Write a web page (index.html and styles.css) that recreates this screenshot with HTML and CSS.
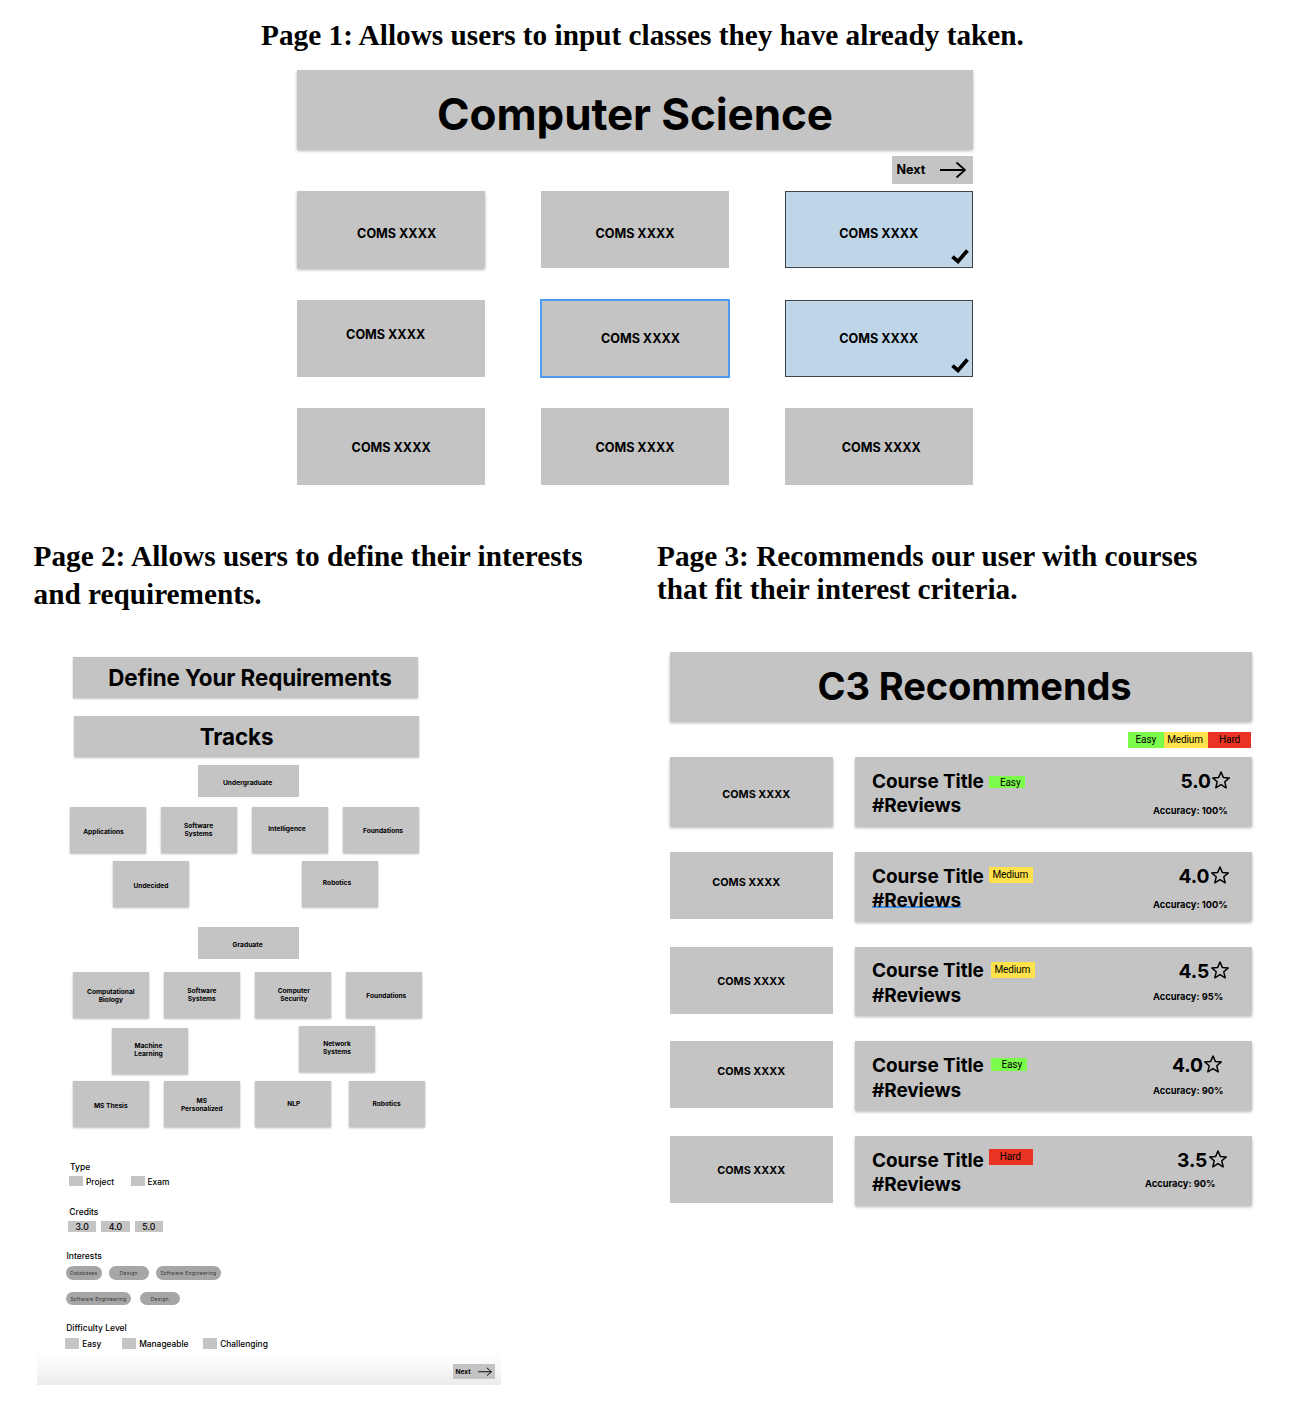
FILE: index.html
```html
<!DOCTYPE html>
<html lang="en">
<head>
<meta charset="utf-8">
<title>Course planner wireframes</title>
<link rel="stylesheet" href="styles.css">
</head>
<body>
<svg class="defs" aria-hidden="true">
  <symbol id="arrow" viewBox="0 0 26 18"><path d="M0 9H25M16.5 1.5L25 9L16.5 16.5" fill="none" stroke="#000" stroke-width="1.8"/></symbol>
  <symbol id="check" viewBox="0 0 18 15"><path d="M1.5 7.6L7 12.4L16.4 1.4" fill="none" stroke="#000" stroke-width="3.8"/></symbol>
  <symbol id="star" viewBox="0 0 18 18"><path d="M9 1L11.3 6.4L17.3 6.9L12.8 10.8L14.2 16.8L9 13.6L3.8 16.8L5.2 10.8L0.7 6.9L6.7 6.4Z" fill="none" stroke="#000" stroke-width="1.5" stroke-linejoin="round"/></symbol>
</svg>

<section class="classes">
  <h2 class="caption caption-center">Page 1: Allows users to input classes they have already taken.</h2>
  <div class="classes-screen">
    <header class="banner banner-lg">Computer Science</header>
    <div class="next next-lg"><span>Next</span><svg><use href="#arrow"/></svg></div>
    <div class="class-grid">
      <div class="class-card raised"><span class="right-6 down-4">COMS XXXX</span></div>
      <div class="class-card"><span class="down-4">COMS XXXX</span></div>
      <div class="class-card taken"><span class="down-4">COMS XXXX</span><svg class="check"><use href="#check"/></svg></div>
      <div class="class-card"><span class="left-6 up-4">COMS XXXX</span></div>
      <div class="class-card focused"><span class="right-6">COMS XXXX</span></div>
      <div class="class-card taken"><span>COMS XXXX</span><svg class="check"><use href="#check"/></svg></div>
      <div class="class-card"><span class="down-1">COMS XXXX</span></div>
      <div class="class-card"><span class="down-1">COMS XXXX</span></div>
      <div class="class-card"><span class="right-3 down-1">COMS XXXX</span></div>
    </div>
  </div>
</section>

<main class="columns">
  <section class="requirements">
    <h2 class="caption caption-loose">Page 2: Allows users to define their interests<br>and requirements.</h2>
    <div class="req-screen">
      <header class="banner banner-sm define"><span>Define Your Requirements</span></header>
      <header class="banner banner-sm tracks"><span>Tracks</span></header>

      <div class="level undergrad"><span>Undergraduate</span></div>
      <div class="track-row row-a">
        <div class="track"><span class="left-4 down-2">Applications</span></div>
        <div class="track"><span>Software<br>Systems</span></div>
        <div class="track"><span class="left-3 up-1">Intelligence</span></div>
        <div class="track"><span class="right-3 down-1">Foundations</span></div>
      </div>
      <div class="track-row row-b">
        <div class="track"><span class="down-2">Undecided</span></div>
        <div class="track"><span class="left-3 up-1">Robotics</span></div>
      </div>

      <div class="level graduate"><span>Graduate</span></div>
      <div class="track-row row-c">
        <div class="track"><span class="down-1">Computational<br>Biology</span></div>
        <div class="track"><span>Software<br>Systems</span></div>
        <div class="track"><span class="right-1">Computer<br>Security</span></div>
        <div class="track"><span class="right-3 down-1">Foundations</span></div>
      </div>
      <div class="track-row row-d">
        <div class="track"><span class="left-2 up-1">Machine<br>Learning</span></div>
        <div class="track"><span class="up-1">Network<br>Systems</span></div>
      </div>
      <div class="track-row row-e">
        <div class="track"><span class="down-2">MS Thesis</span></div>
        <div class="track"><span class="down-1">MS<br>Personalized</span></div>
        <div class="track"><span class="right-1">NLP</span></div>
        <div class="track"><span>Robotics</span></div>
      </div>

      <div class="field type">
        <h3>Type</h3>
        <div class="options"><label class="w61"><i></i>Project</label><label><i></i>Exam</label></div>
      </div>
      <div class="field credits">
        <h3>Credits</h3>
        <div class="credit-row"><b>3.0</b><b class="wide">4.0</b><b>5.0</b></div>
      </div>
      <div class="field interests">
        <h3>Interests</h3>
        <div class="pills"><em class="p37">Databases</em><em class="p40">Design</em><em class="p66">Software Engineering</em></div>
        <div class="pills second"><em class="p66">Software Engineering</em><em class="p40">Design</em></div>
      </div>
      <div class="field difficulty">
        <h3>Difficulty Level</h3>
        <div class="options"><label class="w57"><i></i>Easy</label><label class="w81"><i></i>Manageable</label><label><i></i>Challenging</label></div>
      </div>
      <footer class="req-footer"><div class="next next-sm"><span>Next</span><svg><use href="#arrow"/></svg></div></footer>
    </div>
  </section>

  <section class="recommends">
    <h2 class="caption">Page 3: Recommends our user with courses<br>that fit their interest criteria.</h2>
    <div class="rec-screen">
      <header class="banner banner-md">C3 Recommends</header>
      <div class="legend"><span class="easy">Easy</span><span class="medium">Medium</span><span class="hard">Hard</span></div>

      <article class="rec rec-1">
        <div class="code raised"><span>COMS XXXX</span></div>
        <div class="course">
          <div class="title">Course Title<br>#Reviews</div>
          <span class="badge easy">Easy</span>
          <div class="rating"><div class="score">5.0<svg><use href="#star"/></svg></div><div class="accuracy">Accuracy: 100%</div></div>
        </div>
      </article>
      <article class="rec rec-2">
        <div class="code"><span>COMS XXXX</span></div>
        <div class="course">
          <div class="title">Course Title<br><u>#Reviews</u></div>
          <span class="badge medium">Medium</span>
          <div class="rating"><div class="score">4.0<svg><use href="#star"/></svg></div><div class="accuracy">Accuracy: 100%</div></div>
        </div>
      </article>
      <article class="rec rec-3">
        <div class="code"><span>COMS XXXX</span></div>
        <div class="course">
          <div class="title">Course Title<br>#Reviews</div>
          <span class="badge medium">Medium</span>
          <div class="rating"><div class="score">4.5<svg><use href="#star"/></svg></div><div class="accuracy">Accuracy: 95%</div></div>
        </div>
      </article>
      <article class="rec rec-4">
        <div class="code"><span>COMS XXXX</span></div>
        <div class="course">
          <div class="title">Course Title<br>#Reviews</div>
          <span class="badge easy">Easy</span>
          <div class="rating"><div class="score">4.0<svg><use href="#star"/></svg></div><div class="accuracy">Accuracy: 90%</div></div>
        </div>
      </article>
      <article class="rec rec-5">
        <div class="code"><span>COMS XXXX</span></div>
        <div class="course">
          <div class="title">Course Title<br>#Reviews</div>
          <span class="badge hard">Hard</span>
          <div class="rating"><div class="score">3.5<svg><use href="#star"/></svg></div><div class="accuracy">Accuracy: 90%</div></div>
        </div>
      </article>
    </div>
  </section>
</main>
</body>
</html>
```

FILE: styles.css
```css
* { box-sizing: border-box; }
body {
  margin: 0;
  width: 1302px;
  height: 1408px;
  overflow: hidden;
  background: #fff;
  color: #000;
  font-family: Inter, "Liberation Sans", sans-serif;
  white-space: nowrap;
}
.defs { display: none; }
svg { display: block; flex: none; }

.caption {
  margin: 0;
  font: bold 29.28px/33px "Liberation Serif", "Times New Roman", serif;
}
.caption-center { width: 1285px; text-align: center; }
.caption-loose { line-height: 38px; margin-top: -1px; }

.banner {
  display: flex;
  align-items: center;
  justify-content: center;
  background: #c4c4c4;
  font-weight: 700;
  box-shadow: 0 2px 3px rgba(0, 0, 0, .28);
}
.raised { box-shadow: 0 2px 3px rgba(0, 0, 0, .28); }

/* Label nudges inside the cards */
.right-1 { margin-left: 2px; }
.right-3 { margin-left: 5px; }
.right-6 { margin-left: 11px; }
.left-2 { margin-right: 3px; }
.left-3 { margin-right: 5px; }
.left-4 { margin-right: 8px; }
.left-6 { margin-right: 11px; }
.down-1 { margin-top: 2px; }
.down-2 { margin-top: 4px; }
.down-4 { margin-top: 8px; }
.up-1 { margin-bottom: 2px; }
.up-4 { margin-bottom: 8px; }

/* Page 1 */
.classes { height: 538px; padding-top: 19px; }
.classes-screen { width: 676px; margin: 18px 0 0 297px; }
.banner-lg { height: 79px; padding-top: 8px; font-size: 44px; letter-spacing: -.1px; }
.next { display: flex; align-items: center; background: #c4c4c4; font-weight: 700; }
.next-lg {
  width: 81.5px;
  height: 28px;
  margin: 6.5px 0 7.5px auto;
  padding-left: 5px;
  gap: 15px;
  font-size: 12.6px;
}
.next-lg svg { width: 26px; height: 18px; }
.class-grid {
  display: grid;
  grid-template-columns: repeat(3, 188.4px);
  grid-auto-rows: 77px;
  gap: 31.5px 55.4px;
}
.class-card {
  position: relative;
  display: flex;
  align-items: center;
  justify-content: center;
  background: #c4c4c4;
  font-size: 12.6px;
  font-weight: 700;
}
.taken { background: #bfd6e9; border: 1.5px solid #3c444b; }
.focused { outline: 2px solid #4c9bf5; outline-offset: -1px; }
.check { position: absolute; right: 3px; bottom: 3px; width: 18px; height: 15px; }

/* Lower columns */
.columns { display: flex; align-items: flex-start; }
.requirements { width: 657px; padding-left: 33.5px; }
.req-screen { width: 464px; margin-left: 3.5px; padding-top: 44px; }
.banner-sm { width: 345px; height: 41px; font-size: 22.4px; letter-spacing: -.08px; box-shadow: 0 1px 2px rgba(0, 0, 0, .25); }
.define { margin-left: 36px; padding-left: 9px; }
.tracks { margin: 18px 0 0 37px; padding-right: 20px; }
.level {
  display: flex;
  align-items: center;
  justify-content: center;
  width: 100.5px;
  height: 32px;
  margin-left: 161.3px;
  padding: 3px 2px 0 0;
  background: #c4c4c4;
  font-size: 6.7px;
  font-weight: 700;
}
.undergrad { margin-top: 8px; }
.graduate { margin-top: 20.5px; }
.track-row { display: flex; }
.track {
  display: flex;
  align-items: center;
  justify-content: center;
  width: 76px;
  height: 46px;
  background: #c4c4c4;
  box-shadow: 0 1px 2px rgba(0, 0, 0, .28);
  font-size: 6.6px;
  line-height: 8px;
  font-weight: 700;
  text-align: center;
}
.row-a { margin: 9.5px 0 0 32.5px; gap: 15px; }
.row-b { margin: 8px 0 0 76px; gap: 112.5px; }
.row-c { margin: 12.5px 0 0 35.8px; gap: 15px; }
.row-d { margin: 8.5px 0 0 75px; gap: 111px; }
.row-d .track:first-child { margin: 2px 0 -2px; }
.row-e { margin: 9px 0 0 35.8px; gap: 15px; }
.row-e .track:last-child { margin-left: 2.8px; }

.field h3 { margin: 0; font-size: 8.5px; line-height: 10px; font-weight: 500; }
.options { display: flex; font-size: 8.4px; line-height: 12px; font-weight: 500; }
.options label { display: flex; align-items: flex-start; gap: 3px; }
.options i { width: 14px; height: 10.5px; background: #c4c4c4; }
.type { margin: 35px 0 0 32px; }
.type h3, .credits h3, .interests h3, .difficulty h3 { padding-left: 1px; }
.type .options { margin-top: 3.5px; }
.w61 { width: 61.5px; }
.w57 { width: 57px; }
.w81 { width: 81px; }
.credits { margin: 19px 0 0 31.3px; }
.credit-row { display: flex; gap: 5px; margin-top: 4px; }
.credit-row b {
  width: 27.7px;
  height: 11px;
  background: #c4c4c4;
  font-size: 8.7px;
  line-height: 12.5px;
  font-weight: 500;
  text-align: center;
}
.credit-row .wide { width: 29px; }
.interests { margin: 19px 0 0 28.5px; }
.pills { display: flex; gap: 7px; margin-top: 5.5px; }
.pills.second { gap: 9px; margin-top: 12px; }
.pills em {
  height: 13.5px;
  border-radius: 7px;
  background: #a6a6a6;
  color: #333;
  font-size: 5px;
  line-height: 14px;
  font-style: normal;
  letter-spacing: .27px;
  text-align: center;
}
.p37 { width: 36.5px; }
.p40 { width: 39.5px; }
.p66 { width: 65.5px; }
.difficulty { margin: 17.5px 0 0 28.2px; }
.difficulty .options { margin-top: 5.5px; line-height: 13.5px; }
.req-footer {
  height: 35px;
  margin-top: -1.5px;
  padding-top: 14px;
  background: linear-gradient(#fff, #fafafa 40%, #ececec);
}
.next-sm { width: 42px; height: 15px; margin-left: 416px; padding-left: 2.5px; gap: 7px; font-size: 6.6px; }
.next-sm svg { width: 14px; height: 9.5px; }

/* Page 3 */
.rec-screen { width: 582px; margin: 46px 0 0 13px; }
.recommends { padding-top: 2px; }
.banner-md { height: 68.5px; padding-left: 27px; font-size: 38px; letter-spacing: -.1px; }
.easy { background: #7bfb4c; }
.medium { background: #fde24b; }
.hard { background: #ea3323; }
.legend {
  display: flex;
  justify-content: flex-end;
  margin: 11.5px 0.7px 9.5px 0;
  font: 10px/15.5px Roboto, sans-serif;
  letter-spacing: -.12px;
  text-align: center;
}
.legend .easy { width: 36px; }
.legend .medium { width: 44px; padding-right: 1.5px; }
.legend .hard { width: 43.5px; }
.rec { display: flex; justify-content: space-between; height: 68.8px; margin-bottom: 26px; }
.code {
  display: flex;
  justify-content: center;
  width: 162.5px;
  height: 67px;
  background: #c4c4c4;
  font-size: 10.8px;
  line-height: 15.5px;
  font-weight: 700;
}
.course {
  display: flex;
  align-items: flex-start;
  width: 397px;
  padding-left: 17px;
  background: #c4c4c4;
  box-shadow: 0 2px 3px rgba(0, 0, 0, .28);
}
.title { width: 117px; padding-top: 12.8px; font-size: 19px; line-height: 24.4px; font-weight: 700; letter-spacing: -.1px; }
.title u { text-decoration: underline #3f8fe8 1.5px; text-underline-offset: -1px; text-decoration-skip-ink: none; }
.badge { width: 44px; height: 16px; padding-right: 1.5px; font: 10px/16px Roboto, sans-serif; letter-spacing: -.12px; text-align: center; }
.badge.easy { width: 36px; height: 12.5px; padding-left: 8px; line-height: 14.5px; }
.rating { width: 99px; margin-left: auto; padding-top: 12px; }
.score { display: flex; gap: 1.5px; padding-left: 25.5px; font-size: 19.2px; line-height: 24.5px; font-weight: 700; letter-spacing: -.1px; }
.score svg { width: 18px; height: 18px; margin-top: 2px; }
.accuracy { font-size: 9.3px; line-height: 12px; font-weight: 700; }

.rec-1 .code { height: 68.8px; padding: 30px 0 0 10px; }
.rec-2 .code { padding: 23px 10px 0 0; }
.rec-3 .code { padding-top: 27px; }
.rec-4 .code { padding-top: 23px; }
.rec-5 .code { padding-top: 26.5px; }
.rec-1 .badge { margin-top: 18.5px; }
.rec-2 .badge { margin-top: 15px; }
.rec-3 .badge { margin: 15px 0 0 2px; }
.rec-4 .badge { margin: 17px 0 0 1.5px; }
.rec-5 .badge { margin-top: 12.5px; }
.rec-1 .score { padding-left: 27.5px; }
.rec-4 .score { padding-left: 19px; }
.rec-5 .score { padding-left: 24px; }
.rec-1 .accuracy { margin-top: 11.5px; }
.rec-2 .accuracy { margin-top: 10.5px; }
.rec-3 .accuracy { margin-top: 8px; }
.rec-4 .accuracy { margin-top: 7.5px; }
.rec-5 .accuracy { margin: 5px 0 0 -8px; }
```
